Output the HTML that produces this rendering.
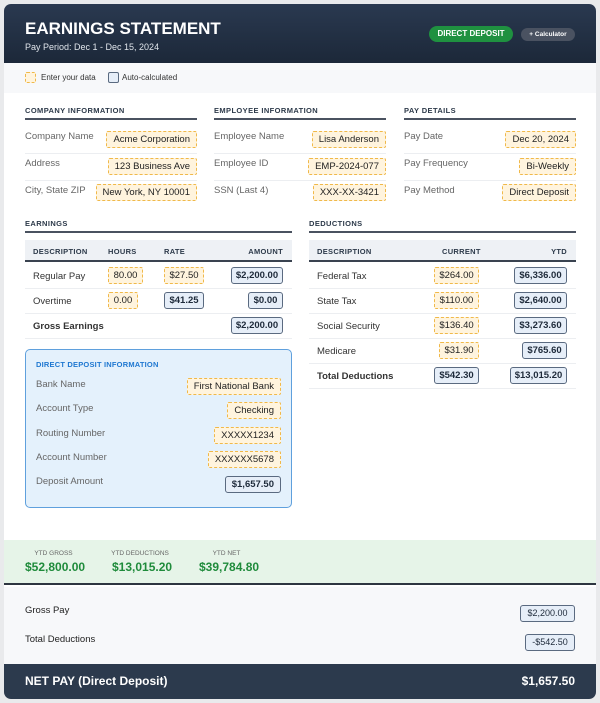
<!DOCTYPE html>
<html><head><meta charset="utf-8"><style>
*{margin:0;padding:0;box-sizing:border-box}
body{width:600px;height:703px;background:#e9eaec;font-family:"Liberation Sans",Arial,sans-serif;position:relative;overflow:hidden;color:#333}
.card{position:absolute;left:4px;top:4px;width:592px;height:695px;background:#fff;border-radius:7px;overflow:hidden}
.a{position:absolute;white-space:nowrap}
.hdr{left:0;top:0;width:592px;height:59px;background:linear-gradient(180deg,#2a3950,#1c2839)}
.sec{font-size:7.5px;font-weight:bold;letter-spacing:.4px;color:#2d3a4a}
.ul{height:2px;background:#4a5260}
.lbl{font-size:9.5px;color:#666}
.in{position:absolute;height:17px;border:1px dashed #f0b94a;background:#fff4de;border-radius:2px;font-size:9.5px;color:#222;line-height:15px;padding:0 6px;text-align:center;white-space:nowrap}
.au{position:absolute;height:17px;border:1px solid #5a6a80;background:#e6eef8;border-radius:3px;font-size:9.5px;font-weight:bold;color:#1e2a3a;line-height:15px;padding:0 6px;text-align:center;white-space:nowrap}
.sep{height:1px;background:#eceef1}
.th{font-size:7.5px;font-weight:bold;color:#2d3a4a;letter-spacing:.3px}
.td{font-size:9.5px;color:#333}
</style></head><body>
<div class="card">
<div class="a hdr"></div>
<div class="a" style="left:21px;top:15px;font-size:17px;font-weight:bold;color:#fff">EARNINGS STATEMENT</div>
<div class="a" style="left:21px;top:38px;font-size:9px;color:#dfe4ea">Pay Period: Dec 1 - Dec 15, 2024</div>
<div class="a" style="left:425px;top:22px;width:84px;height:16px;background:#1f9140;border-radius:8px;color:#fff;font-size:8px;font-weight:bold;text-align:center;line-height:16px">DIRECT DEPOSIT</div>
<div class="a" style="left:517px;top:24px;width:54px;height:13px;background:#4a5261;border-radius:7px;color:#fff;font-size:6.5px;font-weight:bold;text-align:center;line-height:13px">+ Calculator</div>

<div class="a" style="left:0;top:59px;width:592px;height:30px;background:#f7f8fa"></div>
<div class="a" style="left:21px;top:68px;width:11px;height:11px;border:1px dashed #f0b94a;background:#fff4de;border-radius:2px"></div>
<div class="a" style="left:37px;top:69px;font-size:8px;color:#333">Enter your data</div>
<div class="a" style="left:104px;top:68px;width:11px;height:11px;border:1px solid #5a6a80;background:#e6eef8;border-radius:2px"></div>
<div class="a" style="left:118px;top:69px;font-size:8px;color:#333">Auto-calculated</div>

<div class="a sec" style="left:21px;top:102px">COMPANY INFORMATION</div>
<div class="a ul" style="left:21px;top:114px;width:172px"></div>
<div class="a sec" style="left:210px;top:102px">EMPLOYEE INFORMATION</div>
<div class="a ul" style="left:210px;top:114px;width:172px"></div>
<div class="a sec" style="left:400px;top:102px">PAY DETAILS</div>
<div class="a ul" style="left:400px;top:114px;width:172px"></div>

<div class="a lbl" style="left:21px;top:127px">Company Name</div><div class="in" style="right:399px;top:127px">Acme Corporation</div>
<div class="a sep" style="left:21px;top:149px;width:172px"></div>
<div class="a lbl" style="left:21px;top:154px">Address</div><div class="in" style="right:399px;top:154px">123 Business Ave</div>
<div class="a sep" style="left:21px;top:176px;width:172px"></div>
<div class="a lbl" style="left:21px;top:181px">City, State ZIP</div><div class="in" style="right:399px;top:180px">New York, NY 10001</div>

<div class="a lbl" style="left:210px;top:127px">Employee Name</div><div class="in" style="right:210px;top:127px">Lisa Anderson</div>
<div class="a sep" style="left:210px;top:149px;width:172px"></div>
<div class="a lbl" style="left:210px;top:154px">Employee ID</div><div class="in" style="right:210px;top:154px">EMP-2024-077</div>
<div class="a sep" style="left:210px;top:176px;width:172px"></div>
<div class="a lbl" style="left:210px;top:181px">SSN (Last 4)</div><div class="in" style="right:210px;top:180px">XXX-XX-3421</div>

<div class="a lbl" style="left:400px;top:127px">Pay Date</div><div class="in" style="right:20px;top:127px">Dec 20, 2024</div>
<div class="a sep" style="left:400px;top:149px;width:172px"></div>
<div class="a lbl" style="left:400px;top:154px">Pay Frequency</div><div class="in" style="right:20px;top:154px">Bi-Weekly</div>
<div class="a sep" style="left:400px;top:176px;width:172px"></div>
<div class="a lbl" style="left:400px;top:181px">Pay Method</div><div class="in" style="right:20px;top:180px">Direct Deposit</div>

<div class="a sec" style="left:21px;top:215px">EARNINGS</div>
<div class="a ul" style="left:21px;top:227px;width:267px"></div>
<div class="a" style="left:21px;top:236px;width:267px;height:22px;background:#eef1f5;border-bottom:2px solid #3a4350"></div>
<div class="a th" style="left:29px;top:243px">DESCRIPTION</div>
<div class="a th" style="left:104px;top:243px">HOURS</div>
<div class="a th" style="left:160px;top:243px">RATE</div>
<div class="a th" style="right:313px;top:243px">AMOUNT</div>
<div class="a td" style="left:29px;top:267px">Regular Pay</div>
<div class="in" style="left:104px;top:263px;width:35px;padding:0">80.00</div>
<div class="in" style="left:160px;top:263px;width:40px;padding:0">$27.50</div>
<div class="au" style="left:227px;top:263px;width:52px;padding:0">$2,200.00</div>
<div class="a sep" style="left:21px;top:284px;width:267px"></div>
<div class="td a" style="left:29px;top:292px">Overtime</div>
<div class="in" style="left:104px;top:288px;width:30px;padding:0">0.00</div>
<div class="au" style="left:160px;top:288px;width:40px;padding:0">$41.25</div>
<div class="au" style="left:244px;top:288px;width:35px;padding:0">$0.00</div>
<div class="a sep" style="left:21px;top:309px;width:267px"></div>
<div class="a td" style="left:29px;top:317px;font-weight:bold">Gross Earnings</div>
<div class="au" style="left:227px;top:313px;width:52px;padding:0">$2,200.00</div>
<div class="a sep" style="left:21px;top:334px;width:267px"></div>

<div class="a" style="left:21px;top:345px;width:267px;height:159px;background:#e4f1fc;border:1px solid #5fa0dd;border-radius:5px"></div>
<div class="a" style="left:32px;top:356px;font-size:7.5px;font-weight:bold;color:#1f78d1;letter-spacing:.2px">DIRECT DEPOSIT INFORMATION</div>
<div class="a lbl" style="left:32px;top:375px">Bank Name</div><div class="in" style="right:315px;top:374px">First National Bank</div>
<div class="a lbl" style="left:32px;top:399px">Account Type</div><div class="in" style="right:315px;top:398px">Checking</div>
<div class="a lbl" style="left:32px;top:424px">Routing Number</div><div class="in" style="right:315px;top:423px">XXXXX1234</div>
<div class="a lbl" style="left:32px;top:448px">Account Number</div><div class="in" style="right:315px;top:447px">XXXXXX5678</div>
<div class="a lbl" style="left:32px;top:472px">Deposit Amount</div><div class="au" style="right:315px;top:472px">$1,657.50</div>

<div class="a sec" style="left:305px;top:215px">DEDUCTIONS</div>
<div class="a ul" style="left:305px;top:227px;width:267px"></div>
<div class="a" style="left:305px;top:236px;width:267px;height:22px;background:#eef1f5;border-bottom:2px solid #3a4350"></div>
<div class="a th" style="left:313px;top:243px">DESCRIPTION</div>
<div class="a th" style="left:438px;top:243px">CURRENT</div>
<div class="a th" style="right:29px;top:243px">YTD</div>
<div class="a td" style="left:313px;top:267px">Federal Tax</div>
<div class="in" style="left:430px;top:263px;width:45px;padding:0">$264.00</div>
<div class="au" style="left:510px;top:263px;width:53px;padding:0">$6,336.00</div>
<div class="a sep" style="left:305px;top:284px;width:267px"></div>
<div class="a td" style="left:313px;top:292px">State Tax</div>
<div class="in" style="left:430px;top:288px;width:45px;padding:0">$110.00</div>
<div class="au" style="left:510px;top:288px;width:53px;padding:0">$2,640.00</div>
<div class="a sep" style="left:305px;top:309px;width:267px"></div>
<div class="a td" style="left:313px;top:317px">Social Security</div>
<div class="in" style="left:430px;top:313px;width:45px;padding:0">$136.40</div>
<div class="au" style="left:510px;top:313px;width:53px;padding:0">$3,273.60</div>
<div class="a sep" style="left:305px;top:334px;width:267px"></div>
<div class="a td" style="left:313px;top:342px">Medicare</div>
<div class="in" style="left:435px;top:338px;width:40px;padding:0">$31.90</div>
<div class="au" style="left:518px;top:338px;width:45px;padding:0">$765.60</div>
<div class="a sep" style="left:305px;top:359px;width:267px"></div>
<div class="a td" style="left:313px;top:367px;font-weight:bold">Total Deductions</div>
<div class="au" style="left:430px;top:363px;width:45px;padding:0">$542.30</div>
<div class="au" style="left:506px;top:363px;width:57px;padding:0">$13,015.20</div>
<div class="a sep" style="left:305px;top:384px;width:267px"></div>

<div class="a" style="left:0;top:536px;width:592px;height:45px;background:#e6f4e8;border-bottom:2px solid #2d3540"></div>
<div class="a" style="left:21px;top:546px;width:57px;text-align:center;font-size:6.5px;color:#666">YTD GROSS</div>
<div class="a" style="left:21px;top:556px;font-size:12px;font-weight:bold;color:#1f8b3b">$52,800.00</div>
<div class="a" style="left:104px;top:546px;width:64px;text-align:center;font-size:6.5px;color:#666">YTD DEDUCTIONS</div>
<div class="a" style="left:108px;top:556px;font-size:12px;font-weight:bold;color:#1f8b3b">$13,015.20</div>
<div class="a" style="left:195px;top:546px;width:55px;text-align:center;font-size:6.5px;color:#666">YTD NET</div>
<div class="a" style="left:195px;top:556px;font-size:12px;font-weight:bold;color:#1f8b3b">$39,784.80</div>

<div class="a" style="left:0;top:583px;width:592px;height:77px;background:#f7f8fa"></div>
<div class="a" style="left:21px;top:601px;font-size:9.5px;color:#222">Gross Pay</div>
<div class="au" style="left:516px;top:601px;width:55px;padding:0;font-weight:normal;font-size:9px">$2,200.00</div>
<div class="a" style="left:21px;top:630px;font-size:9.5px;color:#222">Total Deductions</div>
<div class="au" style="left:521px;top:630px;width:50px;padding:0;font-weight:normal;font-size:9px">-$542.50</div>

<div class="a" style="left:0;top:660px;width:592px;height:35px;background:#2c3a4d"></div>
<div class="a" style="left:21px;top:670px;font-size:12px;font-weight:bold;color:#fff">NET PAY (Direct Deposit)</div>
<div class="a" style="right:21px;top:670px;font-size:12px;font-weight:bold;color:#fff">$1,657.50</div>
</div>
</body></html>
